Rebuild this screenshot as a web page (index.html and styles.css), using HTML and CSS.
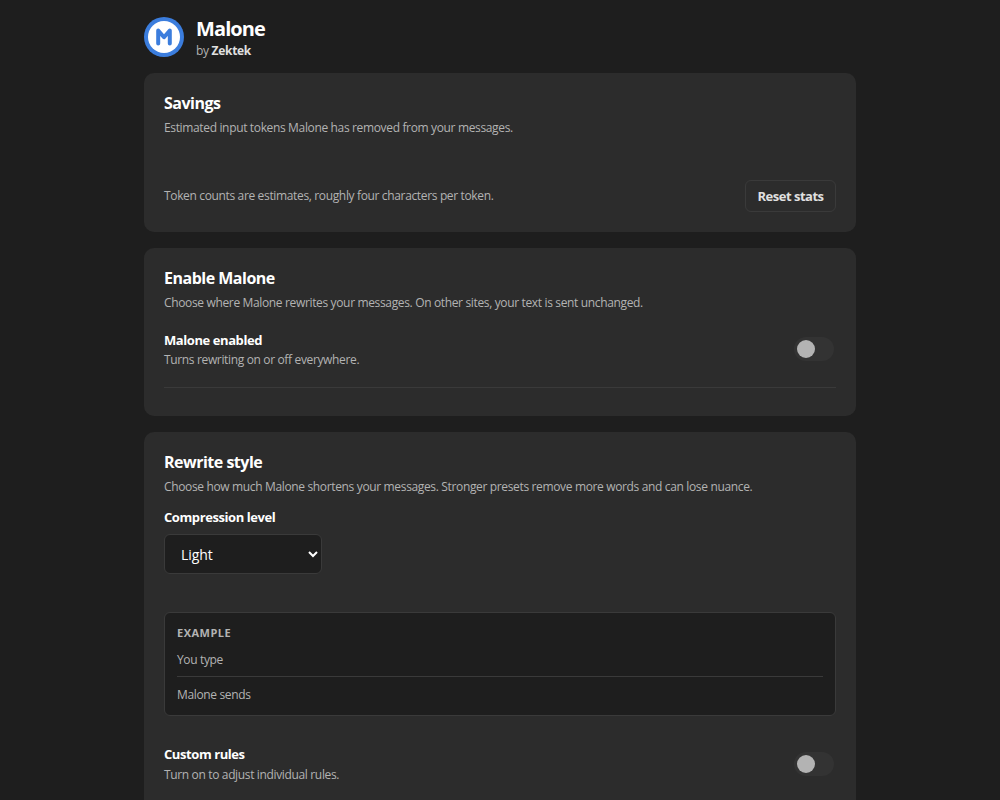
FILE: index.html
```html
<!DOCTYPE html>
<html lang="en">
<head>
  <meta charset="UTF-8">
  <title>Malone</title>
  <link rel="stylesheet" href="styles.css">
</head>
<body>
  <main class="page">
    <header class="header">
      <svg class="logo" viewBox="0 0 40 40" aria-hidden="true">
        <circle cx="20" cy="20" r="20" fill="#3b7ddd"/>
        <circle cx="20" cy="20" r="16" fill="#fff"/>
        <path d="M14.2 26.5V13.6L20 20.2L25.8 13.6V26.5" fill="none" stroke="#3b7ddd" stroke-width="4" stroke-linecap="round" stroke-linejoin="round"/>
      </svg>
      <div class="heading">
        <h1 class="title">Malone</h1>
        <p class="byline">by <strong>Zektek</strong></p>
      </div>
    </header>

    <section class="card">
      <h2>Savings</h2>
      <p class="hint">Estimated input tokens Malone has removed from your messages.</p>
      <div class="stats-footer">
        <p class="hint">Token counts are estimates, roughly four characters per token.</p>
        <button class="reset" type="button">Reset stats</button>
      </div>
    </section>

    <section class="card">
      <h2>Enable Malone</h2>
      <p class="hint">Choose where Malone rewrites your messages. On other sites, your text is sent unchanged.</p>
      <div class="setting divided">
        <div>
          <div class="label">Malone enabled</div>
          <p class="hint">Turns rewriting on or off everywhere.</p>
        </div>
        <div class="toggle"><span class="knob"></span></div>
      </div>
    </section>

    <section class="card last">
      <h2>Rewrite style</h2>
      <p class="hint">Choose how much Malone shortens your messages. Stronger presets remove more words and can lose nuance.</p>
      <label class="label level-label" for="level">Compression level</label>
      <select class="level" id="level">
        <option>Light</option>
      </select>

      <div class="example">
        <div class="example-title">Example</div>
        <div class="example-row">You type</div>
        <div class="example-row">Malone sends</div>
      </div>

      <div class="setting custom">
        <div>
          <div class="label">Custom rules</div>
          <p class="hint">Turn on to adjust individual rules.</p>
        </div>
        <div class="toggle"><span class="knob"></span></div>
      </div>
    </section>
  </main>
</body>
</html>
```
FILE: styles.css
```css
* { box-sizing: border-box; }

html, body {
  margin: 0;
  height: 100%;
  overflow: hidden;
}
body {
  background: #1e1e1e;
  color: #fff;
  font-family: "Segoe UI", "Open Sans", "Noto Sans", sans-serif;
  font-size: 13px;
}
h1, h2, p { margin: 0; }

.page {
  max-width: 760px;
  margin: 0 auto;
  padding: 16px 24px;
}

/* header */
.header {
  display: flex;
  align-items: center;
  gap: 12px;
  height: 41px;
  margin-bottom: 16px;
}
.logo {
  width: 40px;
  height: 40px;
}
.heading { padding-top: 2px; }
.title {
  font-size: 20px;
  line-height: 26px;
  font-weight: 700;
  letter-spacing: -0.9px;
}
.byline {
  font-size: 12px;
  line-height: 17px;
  letter-spacing: -0.3px;
  color: #b3b3b3;
}
.byline strong {
  color: #e0e0e0;
  font-weight: 700;
}

/* cards */
.card {
  background: #2c2c2c;
  border-radius: 10px;
  padding: 20px;
  margin-bottom: 16px;
}
.card h2 {
  font-size: 16px;
  line-height: 20px;
  font-weight: 700;
  letter-spacing: -0.5px;
  margin-bottom: 6px;
}
.hint {
  font-size: 12px;
  line-height: 18px;
  letter-spacing: -0.35px;
  color: #b3b3b3;
}
.label {
  font-size: 13px;
  line-height: 20px;
  font-weight: 700;
  letter-spacing: -0.42px;
  margin-bottom: 1px;
}

.stats-footer {
  display: flex;
  justify-content: space-between;
  align-items: center;
  margin-top: 43px;
}
.reset {
  width: 91px;
  height: 32px;
  padding: 0;
  background: transparent;
  border: 1px solid #3a3a3a;
  border-radius: 6px;
  color: #e0e0e0;
  font: 700 13px/20px "Segoe UI", "Open Sans", "Noto Sans", sans-serif;
  letter-spacing: -0.5px;
}

.setting {
  display: flex;
  justify-content: space-between;
  align-items: center;
}
.divided {
  align-items: flex-start;
  margin: 18px 0 8px;
  padding-bottom: 18px;
  border-bottom: 1px solid #3a3a3a;
}
.divided .toggle { margin-top: 7px; }
.toggle {
  display: flex;
  align-items: center;
  width: 40px;
  height: 24px;
  padding: 3px;
  margin-right: 2px;
  border-radius: 12px;
  background: #333;
}
.knob {
  width: 18px;
  height: 18px;
  border-radius: 50%;
  background: #b3b3b3;
}

.level-label {
  display: block;
  margin: 11px 0 7px;
}
.level {
  display: block;
  width: 158px;
  height: 40px;
  padding: 0 12px;
  background: #1e1e1e;
  border: 1px solid #3a3a3a;
  border-radius: 6px;
  color: #fff;
  font: 14px "Segoe UI", "Open Sans", "Noto Sans", sans-serif;
  letter-spacing: -0.1px;
}

.example {
  margin-top: 38px;
  padding: 12px 12px 11px;
  background: #1e1e1e;
  border: 1px solid #3a3a3a;
  border-radius: 6px;
}
.example-title {
  font-size: 11px;
  line-height: 16px;
  font-weight: 700;
  letter-spacing: 0.5px;
  text-transform: uppercase;
  color: #b3b3b3;
  margin-bottom: 10px;
}
.example-row {
  font-size: 12px;
  line-height: 18px;
  letter-spacing: -0.35px;
  color: #b3b3b3;
}
.example-row + .example-row {
  margin-top: 7px;
  padding-top: 9px;
  border-top: 1px solid #3a3a3a;
}
.custom { margin-top: 28px; }
.custom .label { margin-bottom: 2px; }

/* continues past the fold */
.last { padding-bottom: 60px; }
```
